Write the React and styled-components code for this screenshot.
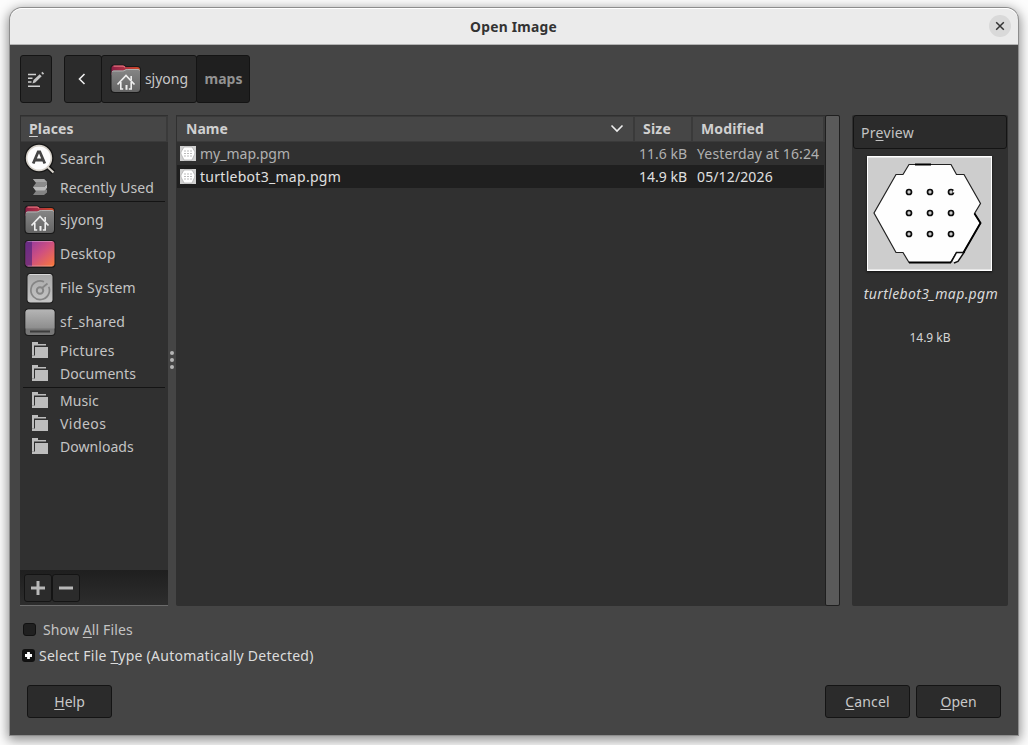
import React from "react";
import styled, { createGlobalStyle, css } from "styled-components";

const places = [
  { name: "Search", icon: "search", big: true },
  { name: "Recently Used", icon: "recent" },
  { divider: true },
  { name: "sjyong", icon: "home", big: true },
  { name: "Desktop", icon: "desktop", big: true, track: 0.2 },
  { name: "File System", icon: "disk", big: true, track: 0.2 },
  { name: "sf_shared", icon: "drive", big: true, track: 0.25 },
  { name: "Pictures", icon: "folder", track: 0.25 },
  { name: "Documents", icon: "folder", track: 0.05 },
  { divider: true },
  { name: "Music", icon: "folder", track: 0.1 },
  { name: "Videos", icon: "folder", track: 0.45 },
  { name: "Downloads", icon: "folder", track: 0.05 },
];

const files = [
  { name: "my_map.pgm", size: "11.6 kB", modified: "Yesterday at 16:24", track: 0 },
  { name: "turtlebot3_map.pgm", size: "14.9 kB", modified: "05/12/2026", track: 0.28, selected: true },
];

function HomeIcon() {
  return (
    <svg width="32" height="32" viewBox="0 0 32 32">
      <defs>
        <linearGradient id="tab" x1="0" x2="1">
          <stop offset="0" stopColor="#8b1f45" />
          <stop offset="0.4" stopColor="#a82f45" />
          <stop offset="1" stopColor="#cf4a24" />
        </linearGradient>
        <linearGradient id="front" x1="0" y1="0" x2="0" y2="1">
          <stop offset="0" stopColor="#868686" />
          <stop offset="1" stopColor="#646464" />
        </linearGradient>
      </defs>
      <path d="M4 1.500h9q2 0 3 1.500h11q4 0 4 4v19q0 4-4 4H4.500q-4 0-4-4V5q0-3.500 3.500-3.500z" fill="#191919" />
      <path d="M4.500 2.500h8.500q1.500 0 2.500 1.500h11.500q3 0 3 3v5H1.500V5q0-2.500 3-2.500z" fill="url(#tab)" />
      <path d="M3.500 3.200h9.500q1.300 0 2 1.300" fill="none" stroke="#df6f7b" strokeWidth="1.200" />
      <path d="M1.500 10q0-2.500 2-2.500h9q1.300 0 2.300-.8t2.300-.7H28q2 0 2 2v17.500q0 3.500-3.500 3.500H5q-3.500 0-3.500-3.500z" fill="url(#front)" />
      <path d="M2.200 9q.3-1 1.500-1h9q1.300 0 2.300-.8t2.300-.7H28q1.200 0 1.500 1" fill="none" stroke="#b5b5b5" strokeWidth=".9" />
      <path d="M7.500 21.500l8.500-9 8.500 9" fill="none" stroke="#eee" strokeWidth="1.700" />
      <path d="M10.800 19v7h2.400M21.200 19v7h-2.400M21.200 13v4" fill="none" stroke="#eee" strokeWidth="1.600" />
      <path d="M15.500 22h2v4.800h-2z" fill="#eee" />
    </svg>
  );
}

function SearchIcon() {
  return (
    <svg width="32" height="32" viewBox="0 0 32 32">
      <path d="M22.500 22.500l7 7" stroke="#141414" strokeWidth="5" />
      <circle cx="15" cy="15" r="14.500" fill="#151515" />
      <circle cx="15" cy="15" r="13.200" fill="#d6d1c9" />
      <circle cx="15" cy="15" r="11.600" fill="#fdfdfd" />
      <path d="M23 23.500l6.500 6" stroke="#d6d1c9" strokeWidth="2.200" />
      <path d="M9.200 20.500L14.200 8.800h1.600L20.800 20.500M11 17h8" fill="none" stroke="#444" strokeWidth="2.800" />
    </svg>
  );
}

function DesktopIcon() {
  return (
    <svg width="32" height="32" viewBox="0 0 32 32">
      <defs>
        <linearGradient id="wall" x1="0" y1="0" x2="1" y2="1">
          <stop offset="0.100" stopColor="#9b3c9c" />
          <stop offset="0.500" stopColor="#cf5080" />
          <stop offset="1" stopColor="#fb7a38" />
        </linearGradient>
      </defs>
      <rect x="0.500" y="2" width="31" height="28" rx="4" fill="#1b1b1b" />
      <rect x="1.500" y="3" width="29" height="25.500" rx="3" fill="url(#wall)" />
      <path d="M4.500 3H8v25.500H4.500q-3 0-3-3v-19.500q0-3 3-3z" fill="#55257b" opacity=".7" />
      <path d="M3.500 3.500h25M3.500 28h25" stroke="#fff" opacity=".3" />
    </svg>
  );
}

function DiskIcon() {
  return (
    <svg width="32" height="32" viewBox="0 0 32 32">
      <defs>
        <linearGradient id="dsk" x1="0" y1="0" x2="0" y2="1">
          <stop offset="0" stopColor="#a8a8a8" />
          <stop offset="1" stopColor="#c6c6c6" />
        </linearGradient>
      </defs>
      <rect x="2.500" y="1" width="27" height="30.500" rx="4" fill="#1c1c1c" />
      <rect x="3.500" y="2" width="25" height="28.500" rx="3" fill="url(#dsk)" />
      <path d="M5.500 2.500h21" stroke="#d8d8d8" />
      <path d="M24.800 14.800a9.300 9.300 0 1 1-4.800-5" fill="none" stroke="#858585" strokeWidth="1.700" />
      <path d="M23.500 11.500l-5.500 4.500" stroke="#858585" strokeWidth="1.700" />
      <circle cx="16" cy="18.500" r="3.200" fill="none" stroke="#858585" strokeWidth="2" />
    </svg>
  );
}

function DriveIcon() {
  return (
    <svg width="32" height="32" viewBox="0 0 32 32">
      <defs>
        <linearGradient id="drv" x1="0" y1="0" x2="0" y2="1">
          <stop offset="0" stopColor="#b5b5b5" />
          <stop offset="1" stopColor="#8d8d8d" />
        </linearGradient>
      </defs>
      <rect x="0.500" y="2.500" width="31" height="27.500" rx="4" fill="#1b1b1b" />
      <rect x="1.500" y="3.500" width="29" height="25.500" rx="3" fill="#777" />
      <path d="M4.500 3.500h23q3 0 3 3v16h-29v-16q0-3 3-3z" fill="url(#drv)" />
      <path d="M6 25.500h20" stroke="#3c3c3c" strokeWidth="2" />
    </svg>
  );
}

function FolderIcon() {
  return (
    <svg width="32" height="17" viewBox="0 0 32 17">
      <path d="M8 0h6v2h8v1.500H10V13.500H8z" fill="#bdbdbd" />
      <path d="M11 5h13v11H8v-2.500h3z" fill="#bdbdbd" />
    </svg>
  );
}

function RecentIcon() {
  return (
    <svg width="32" height="17" viewBox="0 0 32 17">
      <path d="M9 0h11l3 3v2.500L20 8H9l3-4z" fill="#8b8b8b" />
      <path d="M9 0h11l3 3H11.500z" fill="#a6a6a6" />
      <path d="M9 8h11l3 3v2.500L20 16H9l3-4z" fill="#838383" />
      <path d="M9 8h11l3-2.500V9l-2.500 2.500H11.500z" fill="#bababa" />
    </svg>
  );
}

const icons = {
  search: SearchIcon,
  recent: RecentIcon,
  home: HomeIcon,
  desktop: DesktopIcon,
  disk: DiskIcon,
  drive: DriveIcon,
  folder: FolderIcon,
};

function Thumb() {
  return (
    <svg width="16" height="15" viewBox="0 0 16 15">
      <rect width="16" height="15" fill="#d0d0d0" />
      <path d="M4 1h8l3 5-.5 2.500L12 14H4L1 8V6z" fill="#fff" stroke="#aaa" strokeWidth=".7" />
      {[5, 8, 11].map(x => [5, 7.5, 10].map(y => (
        <rect key={x + "-" + y} x={x - 0.5} y={y - 0.5} width="1" height="1" fill="#777" />
      )))}
    </svg>
  );
}

function MapPreview() {
  return (
    <svg width="125" height="115" viewBox="0 0 125 115">
      <rect width="125" height="115" fill="#fff" />
      <rect x="1" y="1.500" width="123" height="112" fill="#cdcdcd" />
      <path
        d="M42 8.500h42l5.500 10h7.500l16.500 29-6 10 6 9.500-17 29.500h-7l-6 10H42l-6-10h-7L7 57l22-38.500h7z"
        fill="#fefefe"
        stroke="#222"
        strokeWidth="1.200"
      />
      <path d="M97 96.500l-6 10h-3.500l-2-2 4-8z" fill="#fefefe" />
      <path d="M84 106.500l5.500-10h7.500l-6 9-4 1.500" fill="none" stroke="#111" strokeWidth="1.500" />
      <path d="M48 8.500h16M42 106.500h42M107.500 57.500l6 9.500-17 29.500" fill="none" stroke="#000" strokeWidth="1.900" />
      {[42, 63, 84].map(x => [36, 57, 78].map(y => (
        <circle key={x + "-" + y} cx={x} cy={y} r="2.500" fill="#ccc" stroke="#0b0b0b" strokeWidth="1.700" />
      )))}
      <path d="M86 34.500h2v2h-2z" fill="#fff" />
    </svg>
  );
}

export default function App() {
  return (
    <>
      <GlobalStyle />
      <Dialog>
        <TitleBar>
          <Title>Open Image</Title>
          <CloseButton>
            <svg width="22" height="22" viewBox="0 0 22 22">
              <path d="M7.200 7.200l7.600 7.600M14.800 7.200l-7.600 7.600" stroke="#333" strokeWidth="1.500" />
            </svg>
          </CloseButton>
        </TitleBar>
        <Content>
          <Toolbar>
            <ToolButton $width={32}>
              <svg width="18" height="18" viewBox="0 0 18 18">
                <path d="M1 4.500h8M1 8.200h4.500M1 12h3.500M1 16.200h12" stroke="#d0d0d0" strokeWidth="1.600" />
                <path d="M5.500 13.500l1-3.500 6.200-5.700 2 2L8.300 12.500zM14.200 3l1.200-1.200 1.700 1.700L15.900 4.700z" fill="#c4c4c4" />
              </svg>
            </ToolButton>
            <PathBar>
              <ToolButton $width={38}>
                <svg width="14" height="14" viewBox="0 0 14 14">
                  <path d="M8.500 2L3.500 7l5 5" fill="none" stroke="#eee" strokeWidth="1.600" />
                </svg>
              </ToolButton>
              <ToolButton $width={96}>
                <HomeIcon />
                <Text>sjyong</Text>
              </ToolButton>
              <ToolButton $width={54} $active>
                <Text $bold>maps</Text>
              </ToolButton>
            </PathBar>
          </Toolbar>

          <Panels>
            <Sidebar>
              <HeaderRow>
                <HeaderCell>
                  <Text $bold $track={0.15}><u>P</u>laces</Text>
                </HeaderCell>
              </HeaderRow>
              <PlaceList>
                {places.map((place, i) => {
                  if (place.divider) return <Divider key={i} />;
                  const Icon = icons[place.icon];
                  return (
                    <PlaceRow key={i} $big={place.big}>
                      <Icon />
                      <Text $track={place.track || 0.1}>{place.name}</Text>
                    </PlaceRow>
                  );
                })}
              </PlaceList>
              <SidebarActions>
                <SmallButton>
                  <svg width="14" height="14" viewBox="0 0 14 14">
                    <path d="M0 7h14M7 0v14" stroke="#b8b8b8" strokeWidth="3" />
                  </svg>
                </SmallButton>
                <SmallButton>
                  <svg width="14" height="14" viewBox="0 0 14 14">
                    <path d="M0 7h14" stroke="#b8b8b8" strokeWidth="3" />
                  </svg>
                </SmallButton>
              </SidebarActions>
            </Sidebar>

            <Handle>
              <Dot />
              <Dot />
              <Dot />
            </Handle>

            <FileList>
              <FileTable>
                <HeaderRow>
                  <HeaderCell $columns>
                    <Text $bold>Name</Text>
                    <svg width="14" height="10" viewBox="0 0 14 10">
                      <path d="M1.500 1.500L7 7 12.500 1.500" fill="none" stroke="#eee" strokeWidth="1.600" />
                    </svg>
                  </HeaderCell>
                  <HeaderCell $width={58}>
                    <Text $bold $track={0.2}>Size</Text>
                  </HeaderCell>
                  <HeaderCell $width={132}>
                    <Text $bold $track={0.15}>Modified</Text>
                  </HeaderCell>
                </HeaderRow>
                {files.map(file => (
                  <FileRow key={file.name} $selected={file.selected}>
                    <FileName>
                      <Thumb />
                      <Text $track={file.track}>{file.name}</Text>
                    </FileName>
                    <FileSize><Text>{file.size}</Text></FileSize>
                    <FileDate><Text $track={0.13}>{file.modified}</Text></FileDate>
                  </FileRow>
                ))}
              </FileTable>
              <Scrollbar />
            </FileList>

            <Preview>
              <PreviewHeader>
                <Text $track={0.3}>Pr<u>e</u>view</Text>
              </PreviewHeader>
              <PreviewImage>
                <MapPreview />
              </PreviewImage>
              <PreviewName><Text $track={0.36}>turtlebot3_map.pgm</Text></PreviewName>
              <PreviewSize>14.9 kB</PreviewSize>
            </Preview>
          </Panels>

          <Options>
            <Option>
              <CheckBox />
              <Text $track={0.12}>Show <u>A</u>ll Files</Text>
            </Option>
            <Option $expander>
              <Expander>
                <svg width="13" height="13" viewBox="0 0 13 13">
                  <path d="M3 6.500h7M6.500 3v7" stroke="#fff" strokeWidth="2.800" />
                </svg>
              </Expander>
              <Text $track={0.25}>Select File <u>T</u>ype (Automatically Detected)</Text>
            </Option>
          </Options>

          <Footer>
            <DialogButton><Text><u>H</u>elp</Text></DialogButton>
            <FooterGroup>
              <DialogButton><Text $track={0.15}><u>C</u>ancel</Text></DialogButton>
              <DialogButton><Text><u>O</u>pen</Text></DialogButton>
            </FooterGroup>
          </Footer>
        </Content>
      </Dialog>
    </>
  );
}

const GlobalStyle = createGlobalStyle`
  * {
    box-sizing: border-box;
  }
  html, body {
    margin: 0;
    height: 745px;
    overflow: hidden;
    background: #fcfcfc;
  }
  body {
    padding: 8px 10px 0;
    font-family: "Noto Sans", "Open Sans", sans-serif;
    font-size: 14px;
    color: #c4c4c4;
  }
  svg {
    display: block;
    flex-shrink: 0;
  }
  u {
    text-decoration-thickness: 1px;
    text-underline-offset: 2px;
  }
`;
const Dialog = styled.div`
  width: 1008px;
  height: 727px;
  display: flex;
  flex-direction: column;
  background: #454545;
  border-radius: 12px 12px 0 0;
  box-shadow: 0 0 0 1px #8d8d8d, 0 3px 12px 2px rgba(0, 0, 0, 0.45);
`;
const TitleBar = styled.div`
  height: 37px;
  flex-shrink: 0;
  display: grid;
  grid-template-columns: 29px 1fr 29px;
  align-items: center;
  background: #ebebeb;
  border-bottom: 1px solid #b3b3b3;
  border-radius: 12px 12px 0 0;
  box-shadow: inset 0 1px 0 #fff;
`;
const Title = styled.div`
  grid-column: 2;
  text-align: center;
  font-size: 13.8px;
  font-weight: 700;
  letter-spacing: 0.25px;
  padding-right: 1px;
  color: #333;
`;
const CloseButton = styled.button`
  width: 22px;
  height: 22px;
  padding: 0;
  border: 0;
  border-radius: 50%;
  background: #d9d9d9;
`;
const Content = styled.div`
  flex: 1;
  display: flex;
  flex-direction: column;
  padding: 10px 10px 17px;
`;
const Text = styled.span`
  font-size: 14px;
  font-weight: ${p => (p.$bold ? 700 : 400)};
  letter-spacing: ${p => p.$track || 0}px;
  line-height: 20px;
  white-space: nowrap;
`;
const Toolbar = styled.div`
  display: flex;
  gap: 12px;
  height: 48px;
`;
const PathBar = styled.div`
  display: flex;
  button + button {
    margin-left: -1px;
  }
`;
const darkButton = css`
  display: flex;
  align-items: center;
  justify-content: center;
  padding: 0;
  font-family: inherit;
  color: #c8c8c8;
  background: #2b2b2b;
  border: 1px solid #141414;
  border-radius: 3px;
`;
const ToolButton = styled.button`
  ${darkButton}
  gap: 3px;
  width: ${p => p.$width}px;
  height: 48px;
  ${p => p.$active && css`
    padding-left: 1px;
    background: #1f1f1f;
    color: #929292;
  `}
`;
const Panels = styled.div`
  display: flex;
  height: 491px;
  margin-top: 12px;
`;
const Sidebar = styled.div`
  width: 148px;
  display: flex;
  flex-direction: column;
  background: #303030;
  border-bottom: 1px solid #6c6c6c;
`;
const HeaderRow = styled.div`
  display: flex;
  height: 27px;
  background: #303030;
  padding: 1px 0 0 1px;
`;
const HeaderCell = styled.div`
  display: flex;
  align-items: center;
  justify-content: ${p => (p.$columns ? "space-between" : "flex-start")};
  flex: ${p => (p.$width ? `0 0 ${p.$width}px` : 1)};
  padding: ${p => (p.$columns ? "0 9px" : "0 8px")};
  background: #464646;
  border: 1px solid #3a3a3a;
  border-width: 1px 2px 1px 0;
  color: #d0d0d0;
`;
const PlaceList = styled.div`
  flex: 1;
`;
const PlaceRow = styled.div`
  display: flex;
  align-items: center;
  gap: 4px;
  height: ${p => (p.$big ? 34 : 23)}px;
  padding-left: 4px;
`;
const Divider = styled.div`
  height: 1px;
  margin: 2px 3px 1px;
  background: #141414;
`;
const SidebarActions = styled.div`
  display: flex;
  height: 35px;
  padding: 4px;
  background: linear-gradient(#1f1f1f, #2d2d2d);
`;
const SmallButton = styled.button`
  ${darkButton}
  width: 28px;
  height: 28px;
`;
const Handle = styled.div`
  width: 8px;
  display: flex;
  flex-direction: column;
  align-items: center;
  justify-content: center;
  gap: 3px;
  padding-bottom: 1px;
`;
const Dot = styled.div`
  width: 4px;
  height: 4px;
  border-radius: 50%;
  background: #b5b5b5;
`;
const FileList = styled.div`
  display: flex;
  width: 664px;
  background: #303030;
  border-radius: 2px;
`;
const FileTable = styled.div`
  flex: 1;
`;
const FileRow = styled.div`
  display: flex;
  align-items: center;
  height: 23px;
  margin: 0 1px;
  background: ${p => (p.$selected ? "#1f1f1f" : "transparent")};
  color: ${p => (p.$selected ? "#e0e0e0" : "#b0b0b0")};
`;
const FileName = styled.div`
  flex: 1;
  display: flex;
  align-items: center;
  gap: 4px;
  padding-left: 3px;
`;
const FileSize = styled.div`
  width: 58px;
  text-align: right;
  padding-right: 5px;
`;
const FileDate = styled.div`
  width: 132px;
  padding-left: 5px;
`;
const Scrollbar = styled.div`
  width: 15px;
  background: #5a5a5a;
  border: 1px solid #1f1f1f;
  border-radius: 2px;
`;
const Preview = styled.div`
  width: 156px;
  margin-left: 12px;
  display: flex;
  flex-direction: column;
  align-items: center;
  background: #303030;
  border-radius: 2px;
`;
const PreviewHeader = styled.div`
  width: 154px;
  height: 34px;
  display: flex;
  align-items: center;
  padding: 2px 0 0 7px;
  background: #2b2b2b;
  border: 1px solid #141414;
  border-radius: 3px;
`;
const PreviewImage = styled.div`
  margin: 7px 1px 0 0;
  box-shadow: 0 1px 2px #111;
`;
const PreviewName = styled.div`
  margin-top: 13px;
  padding-left: 2px;
  font-style: italic;
  color: #dadada;
`;
const PreviewSize = styled.div`
  margin-top: 25px;
  font-size: 12px;
  line-height: 18px;
  color: #d6d6d6;
`;
const Options = styled.div`
  padding: 11px 2px 0;
`;
const Option = styled.label`
  display: flex;
  align-items: center;
  height: 26px;
  gap: ${p => (p.$expander ? 4 : 7)}px;
  padding-left: ${p => (p.$expander ? 0 : 1)}px;
  color: ${p => (p.$expander ? "#dcdcdc" : "#c4c4c4")};
`;
const CheckBox = styled.span`
  width: 13px;
  height: 13px;
  margin-bottom: 1px;
  background: #202020;
  border: 1px solid #111;
  border-radius: 3px;
`;
const Expander = styled.span`
  width: 13px;
  height: 13px;
  margin-bottom: 1px;
  background: #111;
  border-radius: 3px;
`;
const Footer = styled.div`
  display: flex;
  justify-content: space-between;
  margin-top: auto;
  padding: 0 7px;
`;
const FooterGroup = styled.div`
  display: flex;
  gap: 6px;
`;
const DialogButton = styled.button`
  ${darkButton}
  width: 85px;
  height: 33px;
`;
